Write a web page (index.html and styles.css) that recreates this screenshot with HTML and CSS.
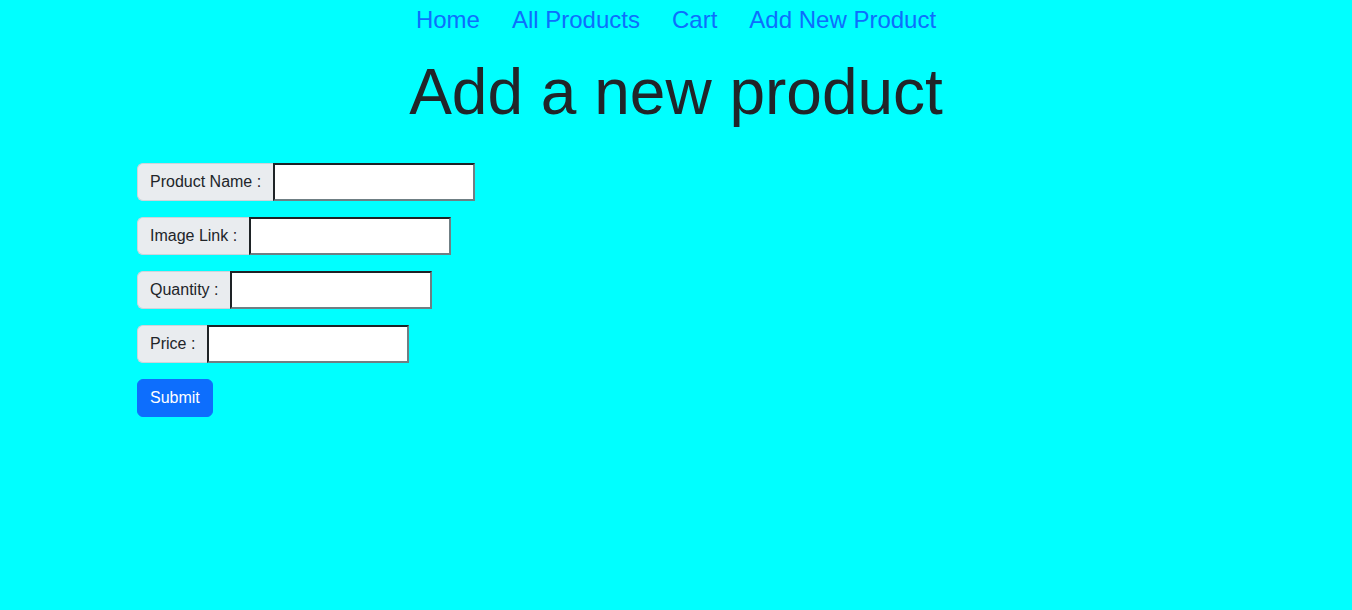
FILE: index.html
```html
<!DOCTYPE html>
<html lang="en">
<head>
<meta charset="utf-8">
<title>Add a new product</title>
<link rel="stylesheet" href="styles.css">
</head>
<body>
<nav class="nav">
  <a class="nav-link" href="#">Home</a>
  <a class="nav-link" href="#">All Products</a>
  <a class="nav-link" href="#">Cart</a>
  <a class="nav-link" href="#">Add New Product</a>
</nav>
<h1 class="title">Add a new product</h1>
<form class="product-form">
  <div class="input-group">
    <span class="input-group-text">Product Name :</span>
    <input class="field" type="text">
  </div>
  <div class="input-group">
    <span class="input-group-text">Image Link :</span>
    <input class="field" type="text">
  </div>
  <div class="input-group">
    <span class="input-group-text">Quantity :</span>
    <input class="field" type="text">
  </div>
  <div class="input-group">
    <span class="input-group-text">Price :</span>
    <input class="field" type="text">
  </div>
  <button class="btn" type="button">Submit</button>
</form>
</body>
</html>
```

FILE: styles.css
```css
* { box-sizing: border-box; }
html, body {
  margin: 0;
  padding: 0;
  background: #00ffff;
  color: #212529;
  font-family: "Liberation Sans", Arial, sans-serif;
  font-size: 16px;
  line-height: 1.5;
}
.nav {
  display: flex;
  justify-content: center;
  padding-top: 2px;
}
.nav-link {
  font-size: 24px;
  line-height: 36px;
  padding: 0 16px;
  color: #0d6efd;
  text-decoration: none;
}
.title {
  margin: 16px 0 32px;
  font-size: 64px;
  font-weight: 400;
  line-height: 1.2;
  text-align: center;
}
.product-form {
  padding-left: 137px;
  display: flex;
  flex-direction: column;
  align-items: flex-start;
  gap: 16px;
}
.input-group {
  display: flex;
  align-items: stretch;
}
.input-group-text {
  display: flex;
  align-items: center;
  padding: 6px 12px;
  font-size: 16px;
  line-height: 24px;
  background: #e9ecef;
  border: 1px solid #ced4da;
  border-right: none;
  border-radius: 6px 0 0 6px;
  color: #212529;
}
.field {
  width: 202px;
  height: 38px;
  margin: 0;
  padding: 1px 2px;
  background: #fff;
  border-style: solid;
  border-width: 2px;
  border-color: #1e2326 #6f7f84 #6f7f84 #1e2326;
  border-radius: 0;
  font-family: inherit;
  font-size: 13px;
}
.btn {
  height: 38px;
  padding: 6px 12px;
  font-family: inherit;
  font-size: 16px;
  line-height: 24px;
  color: #fff;
  background: #0d6efd;
  border: 1px solid #0d6efd;
  border-radius: 6px;
  cursor: pointer;
}
```
